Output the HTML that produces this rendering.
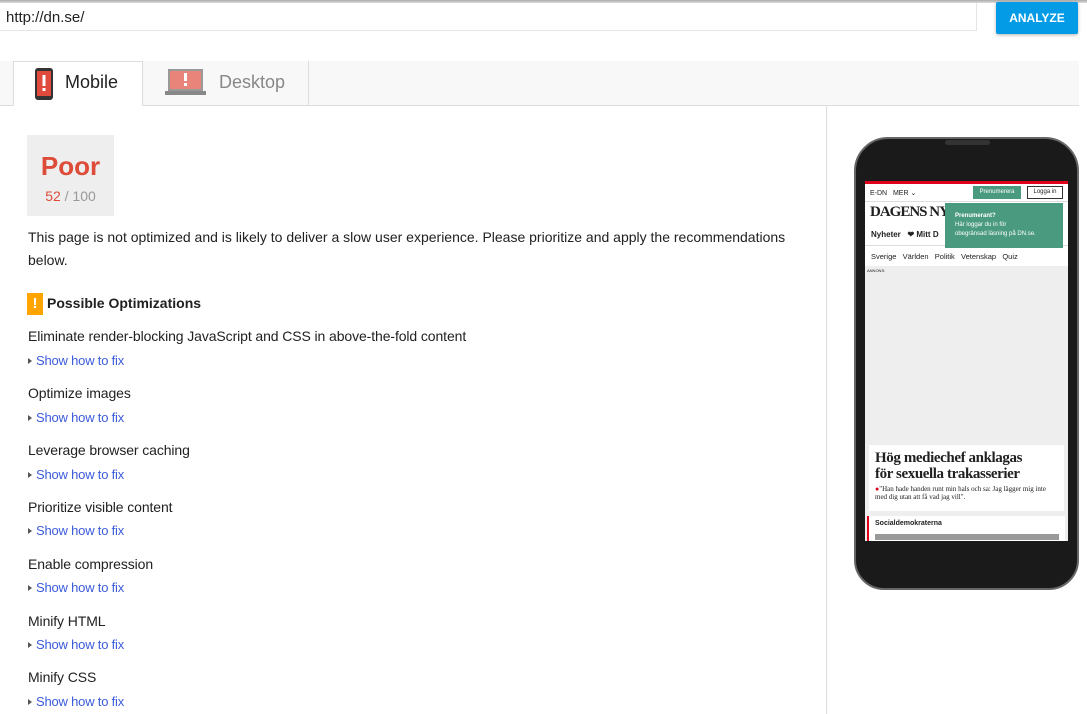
<!DOCTYPE html>
<html><head><meta charset="utf-8"><style>
*{margin:0;padding:0;box-sizing:border-box}
body{width:1087px;height:714px;overflow:hidden;background:#fff;font-family:"Liberation Sans",sans-serif;position:relative;color:#212121}
.abs{position:absolute}
.topbar{left:0;top:0;width:1087px;height:3px;background:linear-gradient(#aaa,#ddd)}
.url{left:0;top:3px;width:977px;height:28px;border:1px solid #e5e5e5;border-top:none;border-left:none;font-size:15px;padding:6px 0 0 6px;color:#222}
.btn{left:996px;top:2px;width:82px;height:32px;background:#039be5;color:#fff;font-size:12px;font-weight:bold;text-align:center;line-height:32px;border-radius:2px;box-shadow:0 1px 3px rgba(0,0,0,.3)}
.tabs{left:0;top:61px;width:1079px;height:45px;background:#f8f8f8;border-bottom:1px solid #ddd}
.tab1{left:13px;top:61px;width:130px;height:45px;background:#fff;border:1px solid #ddd;border-bottom:none}
.tab2sep{left:308px;top:61px;width:1px;height:44px;background:#ddd}
.tt{font-size:18px}
.lborder{left:826px;top:106px;width:1px;height:608px;background:#ddd}
.score{left:27px;top:135px;width:87px;height:81px;background:#eee;text-align:center}
.sec{left:28px;font-size:14px;color:#212121;letter-spacing:-0.1px}
.fix{left:28px;font-size:13px;color:#3b5bdb;letter-spacing:-0.2px}
.fix:before{content:"";display:inline-block;border-left:4px solid #555;border-top:3.5px solid transparent;border-bottom:3.5px solid transparent;margin-right:4px;vertical-align:1px}
</style></head><body>
<div class="abs topbar"></div>
<div class="abs url">http://dn.se/</div>
<div class="abs btn">ANALYZE</div>
<div class="abs tabs"></div>
<div class="abs tab1"></div>
<div class="abs tab2sep"></div>
<svg class="abs" style="left:35px;top:68px" width="18" height="32"><rect x="0" y="0" width="18" height="32" rx="3" fill="#333"/><rect x="2" y="3" width="14" height="25" fill="#e04a3c"/><rect x="7.5" y="7" width="3" height="11" fill="#fff"/><rect x="7.5" y="20" width="3" height="3" fill="#fff"/></svg>
<div class="abs tt" style="left:65px;top:72px;color:#212121">Mobile</div>
<svg class="abs" style="left:165px;top:68px" width="41" height="30"><rect x="3" y="1" width="35" height="22" fill="#999"/><rect x="5" y="3" width="31" height="18" fill="#e8847a"/><rect x="19" y="5" width="3" height="8" fill="#fff"/><rect x="19" y="15" width="3" height="3" fill="#fff"/><rect x="0" y="23" width="41" height="4" fill="#888"/></svg>
<div class="abs tt" style="left:219px;top:72px;color:#888">Desktop</div>
<div class="abs lborder"></div>
<div class="abs score"><div style="font-size:26px;font-weight:bold;color:#dd4b39;margin-top:16px">Poor</div><div style="font-size:14px;color:#999;margin-top:6px"><span style="color:#dd4b39">52</span> / 100</div></div>
<div class="abs" style="left:28px;top:226px;width:780px;font-size:14px;line-height:23px;color:#212121">This page is not optimized and is likely to deliver a slow user experience. Please prioritize and apply the recommendations below.</div>
<div class="abs" style="left:27px;top:293px;width:16px;height:22px;background:#ffa400;color:#fff;font-weight:bold;font-size:15px;text-align:center;line-height:22px">!</div>
<div class="abs" style="left:47px;top:295px;font-size:14px;font-weight:bold">Possible Optimizations</div>
<div class="abs sec" style="top:328px">Eliminate render-blocking JavaScript and CSS in above-the-fold content</div><div class="abs fix" style="top:353px">Show how to fix</div>
<div class="abs sec" style="top:385px">Optimize images</div><div class="abs fix" style="top:410px">Show how to fix</div>
<div class="abs sec" style="top:442px">Leverage browser caching</div><div class="abs fix" style="top:467px">Show how to fix</div>
<div class="abs sec" style="top:499px">Prioritize visible content</div><div class="abs fix" style="top:523px">Show how to fix</div>
<div class="abs sec" style="top:556px">Enable compression</div><div class="abs fix" style="top:580px">Show how to fix</div>
<div class="abs sec" style="top:613px">Minify HTML</div><div class="abs fix" style="top:637px">Show how to fix</div>
<div class="abs sec" style="top:669px">Minify CSS</div><div class="abs fix" style="top:694px">Show how to fix</div>
<!-- phone -->
<div class="abs" style="left:854px;top:137px;width:225px;height:453px;background:#1a1a1a;border-radius:34px 34px 30px 30px;border:2px solid #666"></div>
<div class="abs" style="left:945px;top:140px;width:45px;height:5px;background:#333;border-radius:3px"></div>
<div class="abs" style="left:865px;top:181px;width:203px;height:360px;background:#eee;overflow:hidden;font-size:7px">
 <div style="height:3px;background:#e0001a"></div>
 <div style="height:18px;background:#fff;position:relative;border-bottom:1px solid #ddd"><span style="position:absolute;left:5px;top:5px">E-DN &nbsp; MER ⌄</span><span style="position:absolute;left:108px;top:2px;width:48px;height:13px;background:#4a9a7f;color:#fff;text-align:center;line-height:13px;font-size:6px">Prenumerera</span><span style="position:absolute;left:162px;top:2px;width:36px;height:13px;border:1px solid #333;text-align:center;line-height:11px;font-size:6px">Logga in</span></div>
 <div style="height:22px;background:#fff;font:bold 15px 'Liberation Serif',serif;padding:2px 5px;letter-spacing:-1px">DAGENS NY</div>
 <div style="height:22px;background:#fff;padding:6px 6px;font-weight:bold;font-size:8px;border-bottom:1px solid #ddd">Nyheter &nbsp; ❤ Mitt D</div>
 <div style="height:20px;background:#fff;padding:6px 6px;font-size:7.5px">Sverige &nbsp; Världen &nbsp; Politik &nbsp; Vetenskap &nbsp; Quiz</div>
 <div style="font-size:4px;padding:2px">ANNONS:</div>
 <div style="position:absolute;left:80px;top:22px;width:118px;height:45px;background:#4a9a7f;color:#fff;font-size:6px;padding:9px 10px;line-height:9px"><b>Prenumerant?</b><br>Här loggar du in för<br>obegränsad läsning på DN.se.</div>
 <div style="position:absolute;left:4px;top:264px;width:195px;height:66px;background:#fff;padding:5px 6px;font-family:'Liberation Serif',serif"><div style="font-size:15px;font-weight:bold;line-height:16px;letter-spacing:-0.4px;white-space:nowrap">Hög mediechef anklagas<br>för sexuella trakasserier</div><div style="font-size:7px;margin-top:3px"><span style="color:#e0001a">●</span>"Han hade handen runt min hals och sa: Jag lägger mig inte med dig utan att få vad jag vill".</div></div>
 <div style="position:absolute;left:2px;top:335px;width:198px;height:30px;background:#fff;border-left:2px solid #e0001a;padding:4px 6px;font-size:7px;font-weight:bold">Socialdemokraterna<div style="height:6px;background:#999;margin-top:7px"></div></div>
</div>
</body></html>
